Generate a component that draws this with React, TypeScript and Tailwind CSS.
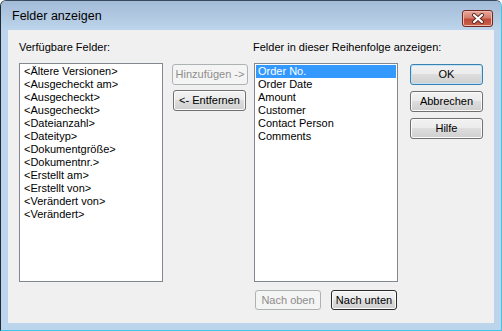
import React from "react";

const leftFields = [
  "<Ältere Versionen>",
  "<Ausgecheckt am>",
  "<Ausgecheckt>",
  "<Ausgecheckt>",
  "<Dateianzahl>",
  "<Dateityp>",
  "<Dokumentgröße>",
  "<Dokumentnr.>",
  "<Erstellt am>",
  "<Erstellt von>",
  "<Verändert von>",
  "<Verändert>",
];

const rightFields = ["Order No.", "Order Date", "Amount", "Customer", "Contact Person", "Comments"];

const btnBase =
  "flex items-center justify-center rounded-[3px] border text-[11px] leading-none select-none";
const btnNormal =
  "border-[#707070] text-black bg-[linear-gradient(to_bottom,#f2f2f2_0%,#ebebeb_49%,#dddddd_50%,#cfcfcf_100%)] shadow-[inset_0_0_0_1px_#fbfbfb]";
const btnDisabled = "border-[#adb2b5] text-[#8d8d8d] bg-[#f4f4f4]";

function Button({
  label,
  className,
  disabled,
  variant,
}: {
  label: string;
  className: string;
  disabled?: boolean;
  variant?: "default" | "focus";
}) {
  let look = btnNormal;
  if (disabled) look = btnDisabled;
  if (variant === "default")
    look =
      "border-[#3c7fb1] text-black bg-[linear-gradient(to_bottom,#f2f2f2_0%,#ebebeb_49%,#dddddd_50%,#cfcfcf_100%)] shadow-[inset_0_0_0_1px_#bfe3f7]";
  if (variant === "focus")
    look =
      "border-[#2a2a2a] text-black bg-[linear-gradient(to_bottom,#f2f2f2_0%,#ebebeb_49%,#dddddd_50%,#cfcfcf_100%)] shadow-[inset_0_0_0_1px_#fbfbfb]";
  return <div className={`${btnBase} ${look} ${className}`}>{label}</div>;
}

function CloseButton() {
  return (
    <div className="absolute left-[461px] top-[9px] w-[31px] h-[17px] rounded-[3px] border border-[#6e2a22] bg-[linear-gradient(to_bottom,#e9a99b_0%,#d47f6e_45%,#c04a37_55%,#c9624a_100%)] shadow-[inset_0_0_0_1px_#f0b9ad] flex items-center justify-center">
      <svg width="14" height="11" viewBox="0 0 14 11">
        <path d="M3 2 L11 9 M11 2 L3 9" stroke="#5a2b25" strokeWidth="4" strokeLinecap="round" />
        <path d="M3 2 L11 9 M11 2 L3 9" stroke="#ffffff" strokeWidth="2.2" strokeLinecap="round" />
      </svg>
    </div>
  );
}

export default function App() {
  return (
    <div
      className="relative w-[502px] h-[331px] flex flex-col rounded-t-[6px] border-t border-l border-t-[#3a4a5c] border-l-[#1f2b38] border-r border-b border-r-[#3cc6e8] border-b-[#3cc6e8] bg-[#bcd4ec] overflow-hidden"
      style={{ fontFamily: '"Liberation Sans", Arial, sans-serif' }}
    >
      <div className="h-[29px] shrink-0 flex items-center pl-[11px] pt-[1px] bg-[linear-gradient(to_bottom,#a2bbd7_0%,#b3cae3_60%,#bcd4ec_100%)]">
        <span className="text-[12.5px] text-black">Felder anzeigen</span>
      </div>
      <CloseButton />

      <div className="flex-1 mx-[7px] mb-[7px] bg-[#f0f0f0] flex pl-[11px] pt-[10px]">
        {/* Verfügbare Felder */}
        <div className="w-[144px] flex flex-col">
          <div className="h-[14px] leading-[14px] text-[11px] text-black">Verfügbare Felder:</div>
          <div className="mt-[9px] h-[219px] border border-[#828790] bg-white pt-[1px] px-[1px]">
            {leftFields.map((f, i) => (
              <div key={i} className="h-[13px] leading-[13px] text-[11px] text-black pl-[3px] whitespace-nowrap">
                {f}
              </div>
            ))}
          </div>
        </div>

        {/* Hinzufügen / Entfernen */}
        <div className="ml-[9px] w-[76px] pt-[24px] flex flex-col gap-[5px]">
          <Button label="Hinzufügen ->" className="h-[21px]" disabled />
          <Button label="<- Entfernen" className="h-[21px] w-[73px] ml-[1px]" />
        </div>

        {/* Reihenfolge */}
        <div className="ml-[6px] w-[144px] flex flex-col">
          <div className="h-[14px] leading-[14px] text-[11px] text-black whitespace-nowrap -ml-[1px]">
            Felder in dieser Reihenfolge anzeigen:
          </div>
          <div className="mt-[9px] h-[219px] border border-[#828790] bg-white p-[1px]">
            {rightFields.map((f, i) => (
              <div
                key={i}
                className={`h-[13px] leading-[13px] text-[11px] pl-[2px] whitespace-nowrap ${
                  i === 0 ? "bg-[#3399ff] text-white" : "text-black"
                }`}
              >
                {f}
              </div>
            ))}
          </div>
          <div className="mt-[8px] flex justify-end gap-[10px] pr-[1px]">
            <Button label="Nach oben" className="w-[66px] h-[20px]" disabled />
            <Button label="Nach unten" className="w-[66px] h-[20px]" variant="focus" />
          </div>
        </div>

        {/* OK / Abbrechen / Hilfe */}
        <div className="ml-[12px] w-[73px] pt-[24px] flex flex-col gap-[6px]">
          <Button label="OK" className="h-[21px]" variant="default" />
          <Button label="Abbrechen" className="h-[21px]" />
          <Button label="Hilfe" className="h-[21px]" />
        </div>
      </div>
    </div>
  );
}
